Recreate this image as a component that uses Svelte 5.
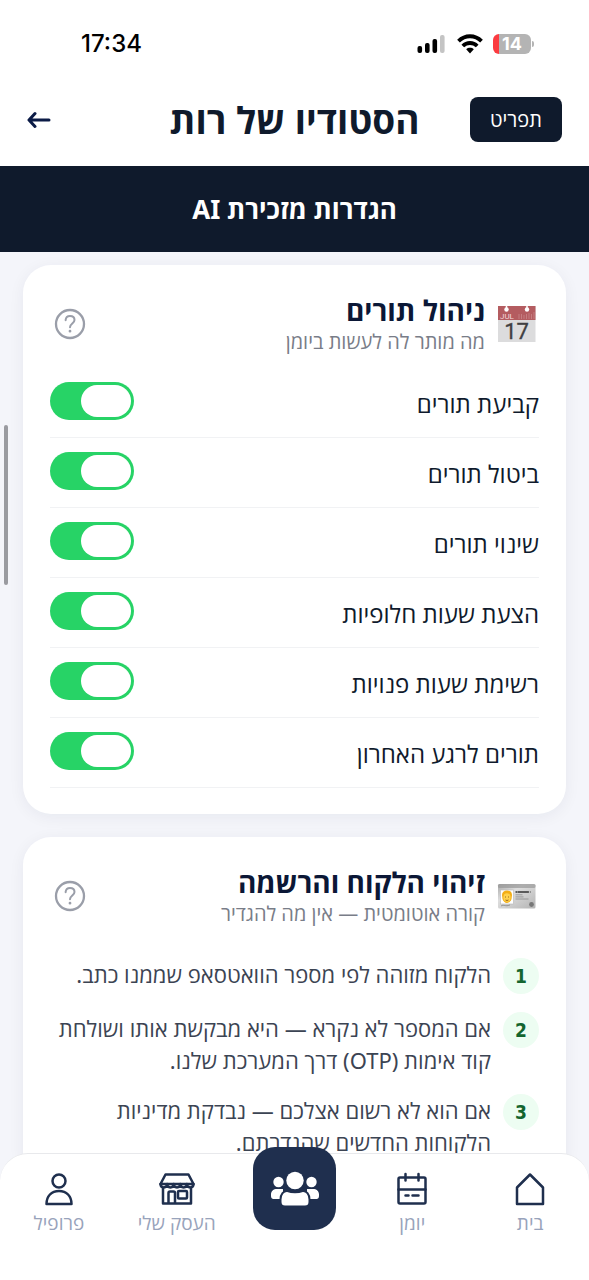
<script lang="ts">
  type Toggle = { id: string; label: string; on: boolean };

  let toggles: Toggle[] = $state([
    { id: 'book', label: 'קביעת תורים', on: true },
    { id: 'cancel', label: 'ביטול תורים', on: true },
    { id: 'change', label: 'שינוי תורים', on: true },
    { id: 'suggest', label: 'הצעת שעות חלופיות', on: true },
    { id: 'list', label: 'רשימת שעות פנויות', on: true },
    { id: 'last', label: 'תורים לרגע האחרון', on: true },
  ]);

  const steps = [
    'הלקוח מזוהה לפי מספר הוואטסאפ שממנו כתב.',
    'אם המספר לא נקרא — היא מבקשת אותו ושולחת קוד אימות (OTP) דרך המערכת שלנו.',
    'אם הוא לא רשום אצלכם — נבדקת מדיניות הלקוחות החדשים שהגדרתם.',
  ];
</script>

{#snippet help()}
  <button class="help" aria-label="עזרה">
    <svg viewBox="0 0 32 32" width="32" height="32" fill="none" stroke="#9a9ea9" stroke-width="2.300" stroke-linecap="round">
      <circle cx="16" cy="16" r="14" />
      <path d="M11.6 12.2c.2-2.600 2-4.200 4.400-4.200 2.600 0 4.500 1.600 4.500 3.900 0 3.600-4.500 3.600-4.500 7.400" stroke-width="2" />
      <circle cx="16" cy="23.200" r=".7" fill="#9a9ea9" stroke-width="1.400" />
    </svg>
  </button>
{/snippet}

<div class="app" dir="rtl">
  <div class="status" dir="ltr">
    <span class="clock">17:34</span>
    <div class="status-icons">
      <svg viewBox="0 0 30 20" width="30" height="20">
        <rect x="0.500" y="12" width="4.600" height="7" rx="2" />
        <rect x="8" y="9" width="4.600" height="10" rx="2" />
        <rect x="15.500" y="5" width="4.600" height="14" rx="2" />
        <rect x="23" y="1" width="4.600" height="18" rx="2" fill="#c4c4c4" />
      </svg>
      <svg viewBox="0 0 26 20" width="26" height="20" fill="none" stroke="#000" stroke-width="3.800">
        <path d="M1.500 7.200C8 .6 18 .6 24.500 7.200" />
        <path d="M5.800 12c4-4 10.400-4 14.400 0" />
        <path d="M13 19.500l-3.800-4.300c2.200-1.900 5.400-1.900 7.600 0z" fill="#000" stroke="none" />
      </svg>
      <span class="battery"><b>14</b></span>
    </div>
  </div>

  <header>
    <button class="menu">תפריט</button>
    <h1>הסטודיו של רות</h1>
    <button class="back" aria-label="חזרה">
      <svg viewBox="0 0 24 18" width="24" height="18" fill="none" stroke="#0b1b46" stroke-width="3" stroke-linecap="round" stroke-linejoin="round">
        <path d="M22 9H2.500M8 2.500L2 9l6 6.500" />
      </svg>
    </button>
  </header>

  <h2 class="banner">הגדרות מזכירת AI</h2>

  <main>
    <section class="card">
      <div class="card-head">
        <svg class="emoji" viewBox="0 0 38 38" width="38" height="38">
          <rect y="1" width="37.500" height="36" fill="#dcdcdd" />
          <rect y="1" width="37.500" height="14" fill="#b45c60" />
          <circle cx="8.500" cy="4.500" r="2.200" fill="#fff" />
          <circle cx="29" cy="4.500" r="2.200" fill="#fff" />
          <path d="M8.500 1v3M29 1v3" stroke="#fff" stroke-width="1.500" />
          <path d="M21 9v5M23.500 9v5M26 10v4M28.500 9v5M31 8v6M33.500 9v5M36 7v7" stroke="#c98589" stroke-width=".8" />
          <text x="2" y="13.500" font-size="8" fill="#f3d9da">JUL</text>
          <text x="18.500" y="34" font-size="22" text-anchor="middle" fill="#404042" stroke="#404042" stroke-width=".3">17</text>
        </svg>
        <div class="titles">
          <h3>ניהול תורים</h3>
          <p>מה מותר לה לעשות ביומן</p>
        </div>
        {@render help()}
      </div>
      <div class="rows">
        {#each toggles as t (t.id)}
          <div class="row">
            <label for={t.id}>{t.label}</label>
            <input id={t.id} type="checkbox" class="switch" bind:checked={t.on} />
          </div>
        {/each}
      </div>
    </section>

    <section class="card">
      <div class="card-head">
        <svg class="emoji" viewBox="0 0 38 38" width="38" height="38">
          <defs>
            <linearGradient id="idcard" x1="0" y1="0" x2="1" y2="1">
              <stop offset="0" stop-color="#a9a9a9" />
              <stop offset=".35" stop-color="#dedede" />
              <stop offset="1" stop-color="#b4b4b4" />
            </linearGradient>
          </defs>
          <rect y="7" width="37.500" height="24.500" rx="1.500" fill="url(#idcard)" />
          <rect y="7" width="37.500" height="4" rx="1.500" fill="#999" opacity=".7" />
          <rect x="2.500" y="13" width="13" height="14" fill="#fff" stroke="#b5b5b5" stroke-width=".6" />
          <path d="M4 18c0-3 2-4.500 5-4.500s5 1.500 5 4.500l-.5 4c-.5 2-2.500 4-4.500 4s-4-2-4.500-4z" fill="#f3ae16" />
          <ellipse cx="9" cy="20.500" rx="3.600" ry="4.300" fill="#ffd24d" />
          <path d="M7.500 19.500v1M10.500 19.500v1M7.500 23q1.500 1 3 0" stroke="#7d4c12" stroke-width=".8" fill="none" />
          <path d="M17.500 15h15" stroke="#333" stroke-width="1.400" stroke-dasharray="2 .4 11 1" />
          <path d="M17.500 17.800h7M17.500 19.900h8M17.500 22h13" stroke="#8b8b8b" stroke-width=".8" />
          <path d="M3 29c3-2 4 1 9-1" stroke="#777" stroke-width=".7" fill="none" />
          <circle cx="33.500" cy="27.500" r="2.400" fill="#777" />
        </svg>
        <div class="titles">
          <h3>זיהוי הלקוח והרשמה</h3>
          <p>קורה אוטומטית — אין מה להגדיר</p>
        </div>
        {@render help()}
      </div>
      <ol>
        {#each steps as step, i}
          <li>
            <span class="num">{i + 1}</span>
            <p>{step}</p>
          </li>
        {/each}
      </ol>
    </section>
    <span class="scroll-thumb"></span>
  </main>

  <nav>
    <a href="#home">
      <svg viewBox="0 0 34 34" width="34" height="34">
        <path d="M4 32V15.500L17 2.500l13 13V32z" />
      </svg>
      בית
    </a>
    <a href="#calendar">
      <svg viewBox="0 0 34 34" width="34" height="34">
        <rect x="3.500" y="5.500" width="27" height="26" rx="1.500" />
        <path d="M3.500 17.500h27M10.500 2v6.500M23.500 2v6.500M10.500 23.500h3M17.500 23.500h6" />
      </svg>
      יומן
    </a>
    <a href="#clients" class="main-tab" aria-label="לקוחות">
      <svg viewBox="0 0 50 36" width="50" height="36">
        <circle cx="8.500" cy="11" r="5.200" />
        <circle cx="41.500" cy="11" r="5.200" />
        <path d="M1 25v-1.500C1 20 3.500 18 7 18h6v10H3.500C2 28 1 27 1 25zM49 25v-1.500C49 20 46.500 18 43 18h-6v10h9.500C48 28 49 27 49 25z" />
        <path class="cut" d="M17.500 20c4 1.500 11 1.500 15 0 4-.5 7 3.500 7 8.500v2.500c0 3-1.500 4.500-4.500 4.500H15c-3 0-4.500-1.500-4.500-4.500v-2.500c0-5 3-9 7-8.500z" />
        <circle cx="25" cy="9.500" r="8.700" />
      </svg>
    </a>
    <a href="#business">
      <svg viewBox="0 0 38 34" width="38" height="34">
        <path d="M7.500 2.500h23L35.500 12H2.500z" />
        <path d="M2.500 12c0 4.500 6.600 4.500 6.600 0 0 4.500 6.600 4.500 6.600 0 0 4.500 6.600 4.500 6.600 0 0 4.500 6.600 4.500 6.600 0 0 4.500 6.600 4.500 6.600 0" />
        <path d="M5 16v15.500h28V16M10.500 31.500V21q0-1.500 1.500-1.500h3.500q1.500 0 1.500 1.500v10.500" />
        <rect x="20" y="19" width="9" height="7.500" rx="1" />
      </svg>
      העסק שלי
    </a>
    <a href="#profile">
      <svg viewBox="0 0 34 34" width="34" height="34">
        <circle cx="17" cy="9" r="6.500" />
        <path d="M4.500 32c0-8 5-13 12.500-13s12.500 5 12.500 13z" />
      </svg>
      פרופיל
    </a>
  </nav>
</div>

<style>
:global(body) {
  background: #fff;
}

.app {
  display: flex;
  flex-direction: column;
  height: 100vh;
  overflow: hidden;
  font-family: "Noto Sans", "Open Sans", sans-serif;
  color: #0f1a2c;
}

h1, h2, h3, p, ol {
  margin: 0;
  padding: 0;
}

button {
  font-family: inherit;
  border: none;
  padding: 0;
  background: none;
  cursor: pointer;
}

/* status bar */
.status {
  display: flex;
  justify-content: space-between;
  align-items: center;
  padding: 32px 58px 0 81px;
  height: 24px;
}

.clock {
  font: 500 24px/24px Inter, sans-serif;
  color: #000;
}

.status-icons {
  display: flex;
  align-items: center;
  gap: 10px;
}

.battery {
  position: relative;
  width: 38px;
  height: 20px;
  border-radius: 6px;
  background: linear-gradient(to right, #fb3b40 6px, #b4b4b4 6px);
  color: #fff;
  text-align: center;
  font: 18px/20px Inter, sans-serif;
}

.battery::after {
  content: "";
  position: absolute;
  right: -3px;
  top: 7px;
  width: 2px;
  height: 6px;
  border-radius: 0 2px 2px 0;
  background: #b4b4b4;
}

/* header */
header {
  flex: none;
  display: grid;
  grid-template-columns: 92px 1fr 92px;
  align-items: center;
  padding: 17px 27px 0;
  height: 110px;
  box-sizing: border-box;
}

.menu {
  height: 45px;
  border-radius: 8px;
  background: #0f1a2c;
  color: #fff;
  font-size: 20px;
}

h1 {
  text-align: center;
  font-size: 37px;
  line-height: 48px;
  font-weight: 700;
}

.back {
  display: flex;
  justify-content: flex-end;
}

.banner {
  flex: none;
  background: #0f1a2c;
  color: #fff;
  text-align: center;
  font-size: 26px;
  line-height: 86px;
}

/* content */
main {
  position: relative;
  flex: 1;
  min-height: 0;
  overflow: hidden;
  display: flex;
  flex-direction: column;
  gap: 23px;
  padding: 13px 23px 0;
  background: #f4f5fa;
}

.card {
  flex: none;
  padding: 27px 27px 26px;
  border-radius: 28px;
  background: #fff;
  box-shadow: 0 3px 16px rgba(20, 30, 60, 0.06);
}

.card-head {
  display: flex;
  align-items: center;
  gap: 13px;
  padding: 0 3px 0 4px;
  height: 64px;
  margin-bottom: 12px;
}

.emoji {
  direction: ltr;
  overflow: visible;
  font-family: Roboto, sans-serif;
}

.titles {
  flex: 1;
  padding-top: 2px;
}

h3 {
  font-size: 28px;
  line-height: 34px;
  color: #0b1736;
}

.titles p {
  font-size: 20px;
  line-height: 30px;
  color: #797d88;
}

.help {
  display: flex;
}

.row {
  display: flex;
  justify-content: space-between;
  align-items: center;
  padding: 14px 0 17px;
  border-bottom: 1px solid #f1f2f4;
}

.row label {
  padding-top: 6px;
  font-size: 24px;
  line-height: 32px;
}

.switch {
  appearance: none;
  display: flex;
  justify-content: flex-end;
  width: 84px;
  height: 38px;
  margin: 0;
  padding: 3px;
  box-sizing: border-box;
  border-radius: 19px;
  background: #c9ccd3;
  cursor: pointer;
}

.switch::before {
  content: "";
  width: 50px;
  height: 32px;
  border-radius: 16px;
  background: #fff;
}

.switch:checked {
  justify-content: flex-start;
  background: #27d366;
}

ol {
  list-style: none;
  display: flex;
  flex-direction: column;
  gap: 18px;
  padding-top: 18px;
}

li {
  display: flex;
  gap: 12px;
}

.num {
  flex: none;
  width: 36px;
  height: 36px;
  border-radius: 18px;
  background: #edfdf2;
  color: #14652f;
  text-align: center;
  font: bold 19px/36px "DejaVu Sans Condensed", "DejaVu Sans", sans-serif;
}

li p {
  font-size: 22px;
  line-height: 32px;
  color: #3c4453;
}

.scroll-thumb {
  position: absolute;
  left: 4px;
  top: 173px;
  width: 4px;
  height: 160px;
  border-radius: 2px;
  background: #9a9ba0;
}

/* bottom tabs */
nav {
  position: relative;
  flex: none;
  display: grid;
  grid-template-columns: repeat(5, 1fr);
  height: 127px;
  box-sizing: border-box;
  margin-top: -28px;
  padding-top: 18px;
  border-top: 1px solid #e8e9ec;
  border-radius: 28px 28px 0 0;
  background: #fff;
}

nav a {
  display: flex;
  flex-direction: column;
  align-items: center;
  color: #98a3bb;
  font-size: 19px;
  line-height: 34px;
  text-decoration: none;
}

nav svg {
  fill: none;
  stroke: #1f2f4e;
  stroke-width: 2.5;
  stroke-linecap: round;
  stroke-linejoin: round;
}

nav .main-tab {
  justify-self: center;
  justify-content: center;
  width: 83px;
  height: 83px;
  margin-top: -25px;
  border-radius: 22px;
  background: #1f2f4e;
}

.main-tab svg {
  fill: #fff;
  stroke: none;
}

.main-tab .cut {
  stroke: #1f2f4e;
  stroke-width: 2;
}
</style>
